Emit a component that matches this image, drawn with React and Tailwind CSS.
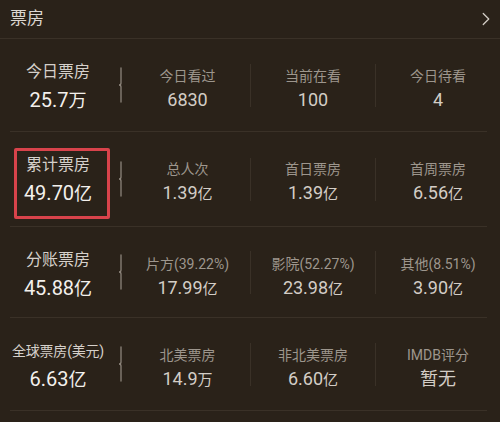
import { ChevronRight } from 'lucide-react';

const rows = [
  {
    label: '今日票房',
    value: '25.7',
    unit: '万',
    h: 'h-[92px]',
    cols: [
      { label: '今日看过', value: '6830' },
      { label: '当前在看', value: '100' },
      { label: '今日待看', value: '4' },
    ],
  },
  {
    label: '累计票房',
    value: '49.70',
    unit: '亿',
    h: 'h-[94px]',
    marked: true,
    cols: [
      { label: '总人次', value: '1.39', unit: '亿' },
      { label: '首日票房', value: '1.39', unit: '亿' },
      { label: '首周票房', value: '6.56', unit: '亿' },
    ],
  },
  {
    label: '分账票房',
    value: '45.88',
    unit: '亿',
    h: 'h-[90px]',
    cols: [
      { label: '片方(39.22%)', value: '17.99', unit: '亿' },
      { label: '影院(52.27%)', value: '23.98', unit: '亿' },
      { label: '其他(8.51%)', value: '3.90', unit: '亿' },
    ],
  },
  {
    label: '全球票房(美元)',
    small: true,
    value: '6.63',
    unit: '亿',
    h: 'h-[92px]',
    cols: [
      { label: '北美票房', value: '14.9', unit: '万' },
      { label: '非北美票房', value: '6.60', unit: '亿' },
      { label: 'IMDB评分', value: '暂无' },
    ],
  },
];

function Brace() {
  return (
    <svg width="9" height="36" viewBox="0 0 9 36" className="shrink-0">
      <path
        d="M5 1 V16 Q5 18 3 18 Q5 18 5 20 V35"
        fill="none"
        stroke="#8d857b"
        strokeWidth="1.3"
        strokeLinecap="round"
      />
    </svg>
  );
}

function Stat({ label, value, unit }) {
  return (
    <div className="flex flex-1 flex-col items-center pt-[27px]">
      <div className="text-[14px] leading-[20px] text-[#9d968d]">{label}</div>
      <div className="mt-[2px] text-[18px] leading-[24px] text-[#d3cdc6]">
        {value}
        {unit && <span className="text-[15px]">{unit}</span>}
      </div>
    </div>
  );
}

export default function App() {
  return (
    <div
      className="h-[422px] w-[500px] overflow-hidden bg-[#2a2219]"
      style={{ fontFamily: 'Roboto, "Noto Sans CJK SC", sans-serif' }}
    >
      <div className="flex h-[39px] items-center justify-between border-b border-[#3a3127] pl-[10px] pr-[3px]">
        <span className="text-[17px] text-[#dcd7d1]">票房</span>
        <ChevronRight size={22} strokeWidth={1.4} color="#d2ccc5" />
      </div>

      {rows.map((row) => (
        <div key={row.label}>
          <div className={`flex items-start ${row.h}`}>
            <div className="relative flex h-full w-[116px] shrink-0 flex-col items-center pt-[22px]">
              {row.marked && (
                <div className="absolute left-[14px] top-[16px] h-[71px] w-[96px] rounded-[2px] border-[3px] border-[#d8434b]" />
              )}
              <div
                className={
                  row.small
                    ? 'whitespace-nowrap text-[14px] leading-[22px] tracking-[-0.2px] text-[#d5d0ca]'
                    : 'whitespace-nowrap text-[16px] leading-[22px] text-[#d5d0ca]'
                }
              >
                {row.label}
              </div>
              <div className="mt-[3px] text-[20px] leading-[28px] text-[#f3f0ec]">
                {row.value}
                <span className="text-[18px]">{row.unit}</span>
              </div>
            </div>
            <div className="flex h-full w-[9px] shrink-0 items-center">
              <Brace />
            </div>
            <div className="flex h-full flex-1 items-stretch">
              {row.cols.map((c, i) => (
                <div key={c.label} className="flex flex-1 items-stretch">
                  {i > 0 && <div className="my-auto h-[43px] w-px bg-[#3a3127]" />}
                  <Stat {...c} />
                </div>
              ))}
            </div>
          </div>
          <div className="ml-[10px] mr-[13px] h-px bg-[#3a3127]" />
        </div>
      ))}
    </div>
  );
}
